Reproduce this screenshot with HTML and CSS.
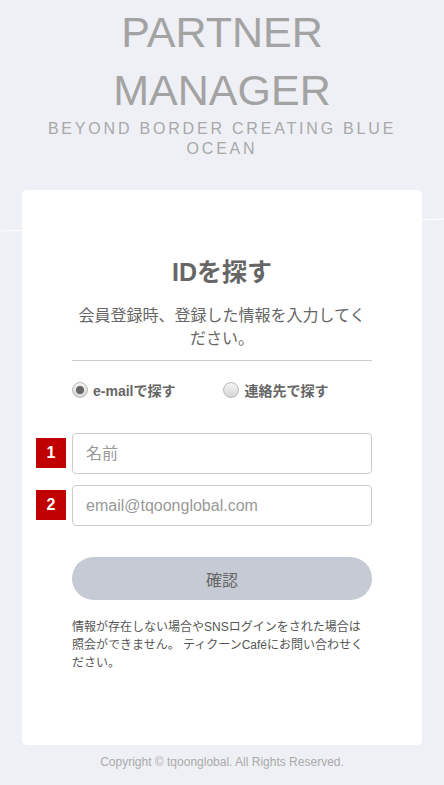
FILE: index.html
```html
<!DOCTYPE html>
<html lang="ja">
<head>
<meta charset="utf-8">
<title>IDを探す - Partner Manager</title>
<link rel="stylesheet" href="styles.css">
</head>
<body>
<svg class="wave" width="444" height="785" viewBox="0 0 444 785">
    <polyline points="0,231 40,230 200,226 444,219" fill="none" stroke="#ffffff" stroke-width="1"/>
</svg>
<div class="page">
    <div class="brand">
        <h1 class="brand-title">PARTNER<br>MANAGER</h1>
        <p class="brand-sub">BEYOND BORDER CREATING BLUE OCEAN</p>
    </div>

    <div class="card">
        <h2 class="card-title">IDを探す</h2>
        <p class="card-desc">会員登録時、登録した情報を入力してください。</p>

        <div class="radios">
            <label class="radio">
                <span class="radio-dot checked"></span>
                e-mailで探す
            </label>
            <label class="radio">
                <span class="radio-dot"></span>
                連絡先で探す
            </label>
        </div>

        <div class="fields">
            <div class="field">
                <span class="badge">1</span>
                <input class="input" type="text" placeholder="名前">
            </div>
            <div class="field">
                <span class="badge">2</span>
                <input class="input" type="text" placeholder="email@tqoonglobal.com">
            </div>
        </div>

        <button class="confirm">確認</button>

        <p class="note">情報が存在しない場合やSNSログインをされた場合は照会ができません。 ティクーンCaféにお問い合わせください。</p>
    </div>

    <p class="copyright">Copyright © tqoonglobal. All Rights Reserved.</p>
</div>
</body>
</html>
```

FILE: styles.css
```css
body {
    margin: 0;
    background-color: #eff0f5;
    font-family: "Liberation Sans", "Noto Sans CJK JP", sans-serif;
}

.wave {
    position: absolute;
    top: 0;
    left: 0;
    z-index: 0;
}

.page {
    position: relative;
    z-index: 1;
    display: flex;
    flex-direction: column;
    align-items: center;
    padding-top: 3px;
}

.brand {
    text-align: center;
}

.brand-title {
    margin: 0;
    font-weight: normal;
    font-size: 43px;
    line-height: 58px;
    color: #a3a3a3;
}

.brand-sub {
    margin: 0;
    width: 360px;
    font-size: 16px;
    line-height: 20px;
    letter-spacing: 2.8px;
    color: #a8a8a8;
}

.card {
    margin-top: 31px;
    width: 400px;
    height: 555px;
    box-sizing: border-box;
    background-color: #ffffff;
    border-radius: 5px;
    padding: 65px 50px 0;
    display: flex;
    flex-direction: column;
}

.card-title {
    margin: 0;
    text-align: center;
    font-size: 25px;
    line-height: 34px;
    font-weight: bold;
    color: #666666;
}

.card-desc {
    margin: 15px 0 0;
    padding-bottom: 10px;
    border-bottom: 1px solid #cccccc;
    text-align: center;
    font-size: 16px;
    line-height: 23px;
    color: #666666;
}

.radios {
    display: flex;
    gap: 48px;
    margin-top: 19px;
}

.radio {
    display: flex;
    align-items: center;
    gap: 5px;
    font-size: 14px;
    font-weight: bold;
    color: #666666;
}

.radio-dot {
    width: 14px;
    height: 14px;
    border: 1px solid #b9b9b9;
    border-radius: 50%;
    background: linear-gradient(#f4f4f4, #d6d6d6);
    display: flex;
    align-items: center;
    justify-content: center;
}

.radio-dot.checked::after {
    content: "";
    width: 8px;
    height: 8px;
    border-radius: 50%;
    background-color: #666666;
}

.fields {
    margin-top: 33px;
    display: flex;
    flex-direction: column;
    gap: 11px;
}

.field {
    position: relative;
}

.badge {
    position: absolute;
    left: -36px;
    top: 5px;
    width: 30px;
    height: 30px;
    background-color: #c00000;
    color: #ffffff;
    font-size: 16px;
    font-weight: bold;
    line-height: 30px;
    text-align: center;
}

.input {
    display: block;
    width: 100%;
    height: 41px;
    box-sizing: border-box;
    border: 1px solid #cccccc;
    border-radius: 4px;
    padding: 0 13px;
    font-family: inherit;
    font-size: 16px;
    color: #333333;
}

.input::placeholder {
    color: #999999;
}

.confirm {
    margin-top: 31px;
    height: 43px;
    border: none;
    border-radius: 22px;
    background-color: #c6cad4;
    font-family: inherit;
    font-size: 16px;
    color: #666666;
}

.note {
    margin: 18px 0 0;
    font-size: 12px;
    line-height: 18px;
    color: #555555;
}

.copyright {
    margin: 10px 0 0;
    font-size: 12px;
    line-height: 14px;
    color: #aaaaaa;
}
```
